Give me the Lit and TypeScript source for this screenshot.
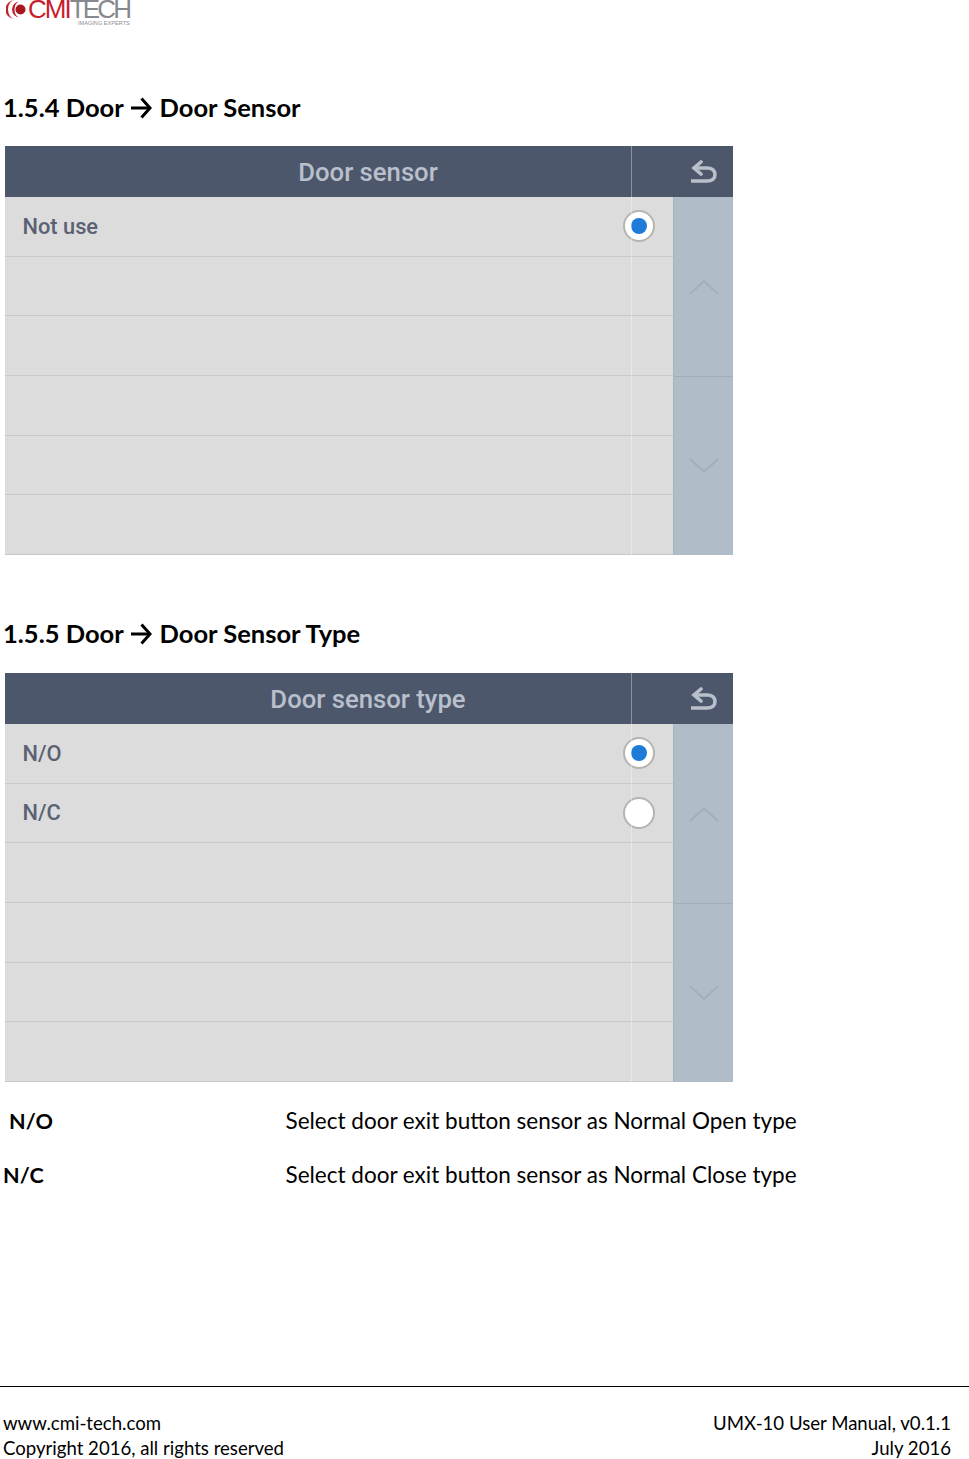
import { LitElement, html, css, svg } from "lit";
import { customElement, property } from "lit/decorators.js";

@customElement("menu-panel")
class MenuPanel extends LitElement {
  @property() heading = "";
  @property({ type: Array }) options: string[] = [];
  static styles = css`
    :host { display: block; width: 728px; height: 409px; position: relative; font-family: Roboto, "Liberation Sans", sans-serif; }
    .frame { display: grid; grid-template-columns: 1fr 60px; grid-template-rows: 51px 1fr; height: 100%; }
    .head { grid-column: 1 / 3; display: grid; grid-template-columns: 1fr 60px; background: #4d576b; align-items: center; }
    .title { color: #b9c0cb; font-size: 25.7px; font-weight: 500; text-align: center; padding-left: 94px; padding-right: 36px; white-space: nowrap; }
    .back { display: flex; justify-content: center; align-items: center; }
    .rows { display: grid; grid-template-rows: repeat(6, 1fr); background: #dcdcdc; }
    .row { display: flex; align-items: center; justify-content: space-between; padding: 0 18px 0 17.5px; border-bottom: 1px solid #c8c9c9; color: #5b6173; font-size: 21.8px; font-weight: 500; }
    .radio { width: 32px; height: 32px; box-sizing: border-box; border-radius: 50%; background: #fff; border: 2px solid #b7b4b0; display: flex; align-items: center; justify-content: center; }
    .dot { width: 16px; height: 16px; border-radius: 50%; background: #1e7bd8; }
    .side { display: grid; grid-template-rows: 1fr 1fr; background: #b1bcc9; border-left: 1px solid #a9b2bd; }
    .btn { display: flex; align-items: center; justify-content: center; }
    .btn + .btn { border-top: 1px solid #a2adba; }
    .sep { position: absolute; left: 626px; top: 0; bottom: 0; width: 1px; background: rgba(255,255,255,.35); }
  `;
  render() {
    const slots = Array.from({ length: 6 }, (_, i) => this.options[i] ?? "");
    return html`<div class="frame">
        <div class="head">
          <div class="title">${this.heading}</div>
          <div class="back">
            <svg width="28" height="24" viewBox="0 0 28 24" fill="none" stroke="#b9c0cb" stroke-width="3.6">
              <path d="M2 21H18C23 21 26 18.5 26 14.5C26 10.5 23 8 18 8H6" />
              <path d="M12 2L5 8L12 14" stroke-linecap="round" />
            </svg>
          </div>
        </div>
        <div class="rows">
          ${slots.map(
            (o, i) => html`<div class="row">
              <span>${o}</span>
              ${o ? html`<span class="radio">${i === 0 ? html`<span class="dot"></span>` : ""}</span>` : ""}
            </div>`
          )}
        </div>
        <div class="side">
          <div class="btn">
            <svg width="30" height="16" viewBox="0 0 30 16" fill="none" stroke="#a3afbe" stroke-width="2">${svg`<path d="M1 15L15 2L29 15" />`}</svg>
          </div>
          <div class="btn">
            <svg width="30" height="16" viewBox="0 0 30 16" fill="none" stroke="#a3afbe" stroke-width="2">${svg`<path d="M1 1L15 14L29 1" />`}</svg>
          </div>
        </div>
      </div>
      <div class="sep"></div>`;
  }
}

const arrow = html`<svg class="ar" width="22" height="22" viewBox="0 0 22 22" fill="none" stroke="#000" stroke-width="3" role="img" aria-label="→">
  <path d="M1 11H19" /><path d="M11.5 1.5L20 11L11.5 20.5" />
</svg>`;

@customElement("app-root")
class AppRoot extends LitElement {
  static styles = css`
    :host { display: block; width: 969px; height: 1459px; overflow: hidden; background: #fff; color: #000; font-family: Lato, "Open Sans", sans-serif; }
    .page { display: flex; flex-direction: column; height: 1459px; padding-left: 3px; box-sizing: border-box; }
    .logo { display: flex; align-items: flex-start; height: 27px; margin-left: 3px; overflow: hidden; position: relative; }
    .logo svg { flex: none; margin-top: 0; }
    .brand { font-family: "Liberation Sans", sans-serif; font-size: 26px; line-height: 19px; height: 19px; letter-spacing: -2px; color: #c8202b; margin-left: 2px; white-space: nowrap; }
    .brand b { font-weight: 400; color: #85898e; letter-spacing: -2.8px; }
    .tag { position: absolute; left: 72px; top: 20px; font-family: "Liberation Sans", sans-serif; font-size: 5.6px; line-height: 6px; color: #8a8d91; white-space: nowrap; }
    h2 { margin: 0; font-size: 25.5px; line-height: 30px; font-weight: 700; white-space: nowrap; }
    h2 .ar { vertical-align: -2px; margin: 0 1px; }
    .h1 { margin-top: 65px; }
    .h2 { margin-top: 63px; }
    menu-panel { margin: 24px 0 0 2px; }
    .h2 + menu-panel { margin-top: 25px; }
    .desc { display: grid; grid-template-columns: 282.5px 1fr; row-gap: 24px; margin-top: 24px; font-size: 22.5px; line-height: 30px; }
    .desc b { font-weight: 700; font-size: 21.6px; }
    .indent { padding-left: 6px; }
    .foot { margin: auto -3px 0 -3px; border-top: 1px solid #000; padding: 24px 21px 0 3px; display: grid; grid-template-columns: 1fr auto; font-size: 18.6px; line-height: 24.5px; height: 73px; box-sizing: border-box; }
    .r { text-align: right; }
  `;
  render() {
    return html`<div class="page">
      <div class="logo">
        <svg width="20" height="20" viewBox="0 0 20 20" fill="#c0202b">
          <path d="M9 0A9.5 9.5 0 0 0 9 19A7 9.5 0 0 1 9 0Z" />
          <path d="M14 1.5A8 8 0 0 0 14 17.5A5.5 8 0 0 1 14 1.5Z" />
          <circle cx="14.5" cy="9.5" r="5" fill="#a8161f" />
        </svg>
        <div class="brand">CMI<b>TECH</b></div>
        <div class="tag">IMAGING EXPERTS</div>
      </div>
      <h2 class="h1">1.5.4 Door ${arrow} Door Sensor</h2>
      <menu-panel heading="Door sensor" .options=${["Not use"]}></menu-panel>
      <h2 class="h2">1.5.5 Door ${arrow} Door Sensor Type</h2>
      <menu-panel heading="Door sensor type" .options=${["N/O", "N/C"]}></menu-panel>
      <div class="desc">
        <b class="indent">N/O</b><span>Select door exit button sensor as Normal Open type</span>
        <b>N/C</b><span>Select door exit button sensor as Normal Close type</span>
      </div>
      <div class="foot">
        <span>www.cmi-tech.com</span><span class="r">UMX-10 User Manual, v0.1.1</span>
        <span>Copyright 2016, all rights reserved</span><span class="r">July 2016</span>
      </div>
    </div>`;
  }
}
